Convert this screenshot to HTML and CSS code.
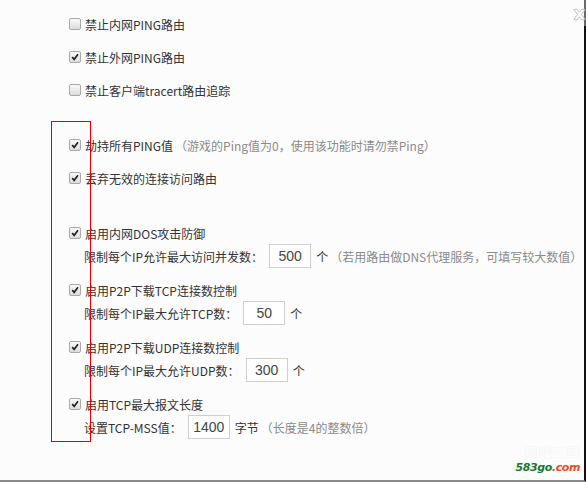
FILE: index.html
```html
<!DOCTYPE html>
<html lang="zh-CN">
  <head>
    <meta charset="UTF-8" />
    <title>路由安全设置</title>
    <link rel="stylesheet" href="styles.css">
  </head>
  <body>
    <div class="panel">
      <div class="group top">
        <div class="row"><span class="cb"></span>禁止内网PING路由</div>
        <div class="row gap"><span class="cb on"><svg viewBox="0 0 12 12"><path d="M2.6 6.2 L5 8.8 L9.6 2.8"/></svg></span>禁止外网PING路由</div>
        <div class="row gap"><span class="cb"></span>禁止客户端tracert路由追踪</div>
      </div>

      <div class="group mid">
        <div class="row"><span class="cb on"><svg viewBox="0 0 12 12"><path d="M2.6 6.2 L5 8.8 L9.6 2.8"/></svg></span>劫持所有PING值<span class="hint">（游戏的Ping值为0，使用该功能时请勿禁Ping）</span></div>
        <div class="row gap"><span class="cb on"><svg viewBox="0 0 12 12"><path d="M2.6 6.2 L5 8.8 L9.6 2.8"/></svg></span>丢弃无效的连接访问路由</div>
      </div>

      <div class="group opt">
        <div class="row"><span class="cb on"><svg viewBox="0 0 12 12"><path d="M2.6 6.2 L5 8.8 L9.6 2.8"/></svg></span>启用内网DOS攻击防御</div>
        <div class="sub">限制每个IP允许最大访问并发数：<span class="num">500</span>个<span class="hint">（若用路由做DNS代理服务，可填写较大数值）</span></div>
      </div>

      <div class="group opt">
        <div class="row"><span class="cb on"><svg viewBox="0 0 12 12"><path d="M2.6 6.2 L5 8.8 L9.6 2.8"/></svg></span>启用P2P下载TCP连接数控制</div>
        <div class="sub">限制每个IP最大允许TCP数：<span class="num">50</span>个</div>
      </div>

      <div class="group opt">
        <div class="row"><span class="cb on"><svg viewBox="0 0 12 12"><path d="M2.6 6.2 L5 8.8 L9.6 2.8"/></svg></span>启用P2P下载UDP连接数控制</div>
        <div class="sub">限制每个IP最大允许UDP数：<span class="num">300</span>个</div>
      </div>

      <div class="group opt">
        <div class="row"><span class="cb on"><svg viewBox="0 0 12 12"><path d="M2.6 6.2 L5 8.8 L9.6 2.8"/></svg></span>启用TCP最大报文长度</div>
        <div class="sub">设置TCP-MSS值：<span class="num">1400</span>字节<span class="hint">（长度是4的整数倍）</span></div>
      </div>
    </div>

    <!-- annotation box -->
    <div class="mark"></div>

    <!-- window edge -->
    <div class="edge"></div>
    <svg class="close" viewBox="0 0 14 14"><path d="M1 2 L4 1 L7 4.5 L10 1 L13 2 L9 7 L13 12 L10 13 L7 9.5 L4 13 L1 12 L5 7 Z"/></svg>

    <div class="logo">
      <div class="logo-cn">网吧三国</div>
      <div class="logo-en"><span class="g">583go</span><span class="r">.com</span></div>
    </div>
  </body>
</html>
```

FILE: styles.css
```css
body {
  margin: 0;
  padding: 0;
  font-family: "Noto Sans CJK SC", "Microsoft YaHei", sans-serif;
  font-size: 12px;
  color: #333;
  background-color: #fcfcfc;
}
.panel {
  width: 586px;
  height: 482px;
  border-right: 2px solid #111;
  border-bottom: 2px solid #8a8a8a;
  padding-left: 69px;
  box-sizing: border-box;
  white-space: nowrap;
}
.group.top {
  padding-top: 13px;
}
.group.mid {
  margin-top: 33px;
}
.group.opt {
  margin-top: 33px;
}
.group.opt + .group.opt {
  margin-top: 11px;
}
.row {
  height: 22px;
  display: flex;
  align-items: center;
}
.row.gap {
  margin-top: 11px;
}
.cb {
  width: 10px;
  height: 10px;
  border: 1px solid #a9a9a9;
  border-radius: 2px;
  background: linear-gradient(#fafafa, #dcdcdc);
  margin-right: 4px;
  display: flex;
  align-items: center;
  justify-content: center;
  flex: none;
}
.cb svg {
  width: 10px;
  height: 10px;
}
.cb svg path {
  fill: none;
  stroke: #222;
  stroke-width: 2;
}
.hint {
  color: #8a8a8a;
  margin-left: 2px;
}
.sub {
  height: 24px;
  display: flex;
  align-items: center;
  padding-left: 15px;
}
.num {
  width: 40px;
  height: 22px;
  border: 1px solid #cfcfcf;
  background: #fff;
  font-family: "Liberation Sans", Arial, sans-serif;
  font-size: 14px;
  color: #444;
  display: flex;
  align-items: center;
  justify-content: center;
  margin: 0 5px 0 6px;
  flex: none;
}
.mark {
  position: absolute;
  left: 51px;
  top: 121px;
  width: 38px;
  height: 319px;
  border: 1px solid #e00000;
}
.edge {
  position: absolute;
  left: 584px;
  top: 0;
  width: 2px;
  height: 26px;
  background: #6a6a6a;
}
.close {
  position: absolute;
  left: 573px;
  top: 8px;
  width: 13px;
  height: 13px;
}
.close path {
  fill: #fff;
  stroke: #b8b8b8;
  stroke-width: 1;
}
.logo {
  position: absolute;
  left: 490px;
  top: 442px;
  width: 90px;
  text-align: right;
}
.logo-cn {
  font-size: 14px;
  color: #f7f7f7;
  line-height: 18px;
}
.logo-en {
  font-family: "DejaVu Sans", sans-serif;
  font-size: 11px;
  font-weight: bold;
  font-style: italic;
  line-height: 16px;
  letter-spacing: -0.4px;
}
.logo-en .g {
  color: #17772a;
}
.logo-en .r {
  color: #ee4a1c;
}
```
